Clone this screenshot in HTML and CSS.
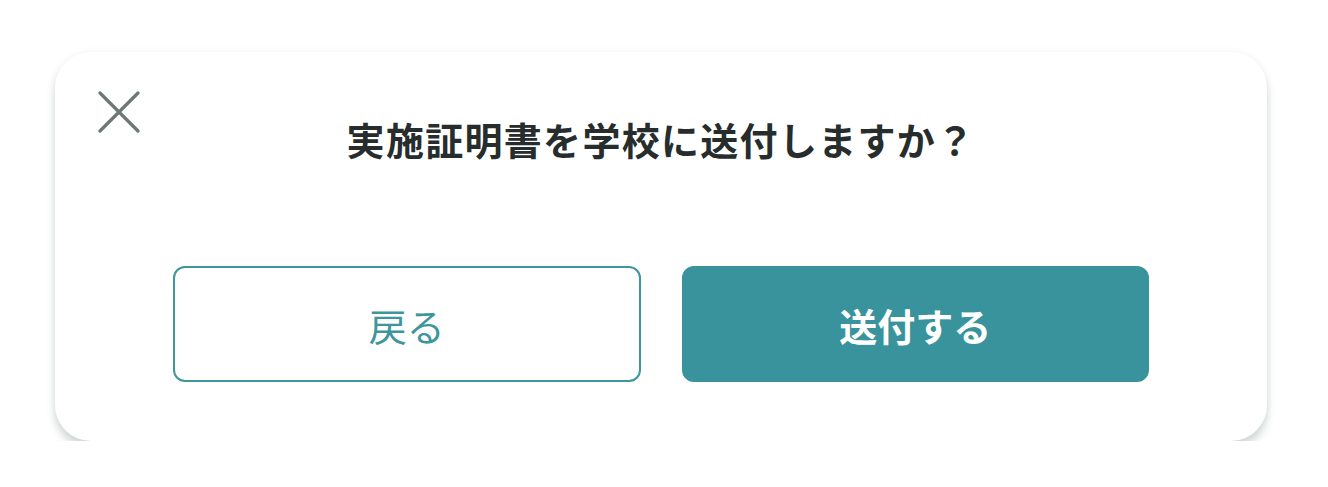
FILE: index.html
```html
<!DOCTYPE html>
<html lang="ja">
<head>
    <meta charset="UTF-8">
    <meta name="viewport" content="width=device-width, initial-scale=1.0">
    <title>実施証明書の送付</title>
    <link rel="stylesheet" href="styles.css">
</head>
<body>
    <main class="page">
        <section class="dialog">
            <button type="button" class="close-btn" aria-label="閉じる">
                <svg width="42" height="42" viewBox="0 0 42 42">
                    <path d="M2 2 L40 40 M40 2 L2 40" stroke="#6d7775" stroke-width="3.2" stroke-linecap="round" fill="none"/>
                </svg>
            </button>
            <h1 class="dialog-title">実施証明書を学校に送付しますか？</h1>
            <div class="actions">
                <button type="button" class="btn btn-outline">戻る</button>
                <button type="submit" class="btn btn-primary">送付する</button>
            </div>
        </section>
    </main>
</body>
</html>
```

FILE: styles.css
```css
body {
    margin: 0;
    padding: 0;
    background-color: #fff;
    font-family: "Noto Sans CJK JP", "Noto Sans", sans-serif;
}

.page {
    padding: 52px 0 0 55px;
}

.dialog {
    position: relative;
    box-sizing: border-box;
    width: 1212px;
    height: 389px;
    padding: 64px 118px 59px;
    background-color: #fff;
    border-radius: 36px;
    box-shadow: 0 7px 9px rgba(70, 95, 100, 0.24), 0 0 10px rgba(0, 0, 0, 0.04);
}

.close-btn {
    position: absolute;
    top: 39px;
    left: 43px;
    padding: 0;
    border: none;
    background: none;
    cursor: pointer;
    line-height: 0;
}

.dialog-title {
    margin: 0;
    height: 48px;
    font-size: 38px;
    line-height: 46px;
    font-weight: 700;
    letter-spacing: 1.3px;
    color: #262d2c;
    text-align: center;
}

.actions {
    display: flex;
    gap: 41px;
    margin-top: 102px;
}

.btn {
    flex: 1;
    height: 116px;
    border-radius: 12px;
    font-family: inherit;
    font-size: 38px;
    cursor: pointer;
}

.btn-outline {
    background-color: #fff;
    border: 2px solid #3e959c;
    color: #3e959c;
    font-weight: 400;
}

.btn-primary {
    background-color: #38939c;
    border: 2px solid #38939c;
    color: #fff;
    font-weight: 700;
}
```
